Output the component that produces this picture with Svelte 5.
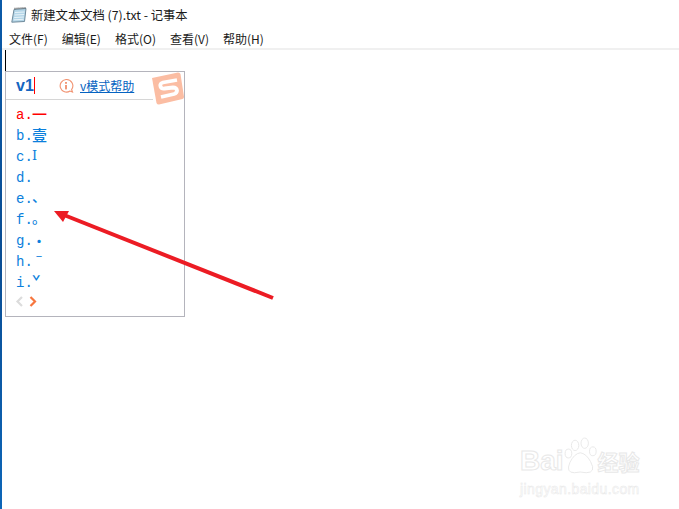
<script>
    const menus = ["文件(F)", "编辑(E)", "格式(O)", "查看(V)", "帮助(H)"];
    // up: how far the glyph sits above the row's middle
    const candidates = [
        { key: "a.", text: "一", active: true, up: 2 },
        { key: "b.", text: "壹", up: 2 },
        { key: "c.", text: "Ⅰ", roman: true, up: 2 },
        { key: "d.", text: "", up: 0 },
        { key: "e.", text: "、", small: true, up: 6 },
        { key: "f.", text: "。", small: true, up: 5 },
        { key: "g.", text: "·", small: true, up: 2 },
        { key: "h.", text: "ˉ", small: true, up: 3 },
        { key: "i.", text: "ˇ", small: true, up: 4 },
    ];
</script>

<div class="desktop">
    <div class="strip"></div>
    <div class="window">
        <div class="titlebar">
            <svg class="app-icon" width="16" height="16" viewBox="0 0 16 16">
                <path d="M3 2.5 L15 1.5 L13.5 14.5 L0.8 15.2 Z" fill="#b4d6e8" stroke="#6f8a9b" stroke-width="1" />
                <path d="M4 5.5 L13.5 5 M3.6 8 L13.2 7.5 M3.2 10.5 L12.9 10 M2.8 12.8 L12.6 12.3" stroke="#e8f3f9" stroke-width="1" />
                <path d="M3.5 1.5 L14.5 0.8" stroke="#555" stroke-width="1.4" stroke-dasharray="1 1" />
            </svg>
            <span>新建文本文档 (7).txt - 记事本</span>
        </div>
        <div class="menubar">
            {#each menus as m}
                <span>{m}</span>
            {/each}
        </div>
        <div class="editor">
            <div class="caret"></div>

            <div class="ime">
                <div class="ime-head">
                    <div class="comp"><b>v1</b><i class="ime-caret"></i></div>
                    <svg class="info" width="16" height="16" viewBox="0 0 16 16" fill="none">
                        <path d="M8 1.5 A6.3 6.3 0 1 0 12 13 L14.5 14 L13.6 11.5 A6.3 6.3 0 0 0 8 1.5 Z" stroke="#f19270" stroke-width="1.1" />
                        <rect x="7.2" y="4" width="1.6" height="1.8" fill="#ee7f58" />
                        <rect x="7.2" y="7" width="1.6" height="4.4" fill="#ee7f58" />
                    </svg>
                    <a class="help" href="#help">v模式帮助</a>
                </div>
                <svg class="sogou" width="34" height="33" viewBox="0 0 34 33">
                    <path d="M1 6 L27 0.5 Q29 0.5 29.5 2 L33 25 Q33 26.5 31.5 27 L8 32.5 Q6 32.5 5.5 31 Z" fill="#fbbda3" />
                    <path d="M26 8 L12 10.5 Q8.5 11.5 9.5 14.5 Q10.5 17 13.5 16.5 L22 15.5 Q25.5 15.5 26 18.5 Q26 21 23 22 L10 25" fill="none" stroke="#fff" stroke-width="3.8" />
                </svg>
                <ul class="list">
                    {#each candidates as c}
                        <li class:active={c.active}>
                            <span class="key">{c.key}</span><span class="word" class:roman={c.roman} class:small={c.small} style="margin-top: -{c.up}px">{c.text}</span>
                        </li>
                    {/each}
                </ul>
                <div class="pager">
                    <svg width="10" height="11" viewBox="0 0 10 11" fill="none"><path d="M7 1 L2.5 5.5 L7 10" stroke="#dcdcdc" stroke-width="2.2" /></svg>
                    <svg width="10" height="11" viewBox="0 0 10 11" fill="none"><path d="M2.5 1 L7 5.5 L2.5 10" stroke="#f7763e" stroke-width="2.2" /></svg>
                </div>
            </div>

            <svg class="arrow" width="240" height="110" viewBox="0 0 240 110">
                <path d="M219 87 L10 4" stroke="#ec1c24" stroke-width="4" />
                <path d="M0 0 L15 0 L9 11 Z" fill="#ec1c24" />
            </svg>
        </div>
    </div>

    <div class="watermark">
        <div class="brand">
            <span>Bai</span>
            <svg width="40" height="44" viewBox="0 0 46 56" fill="#fff" stroke="#e6e6e6" stroke-width="1.2">
                <ellipse cx="15" cy="15" rx="5" ry="7" />
                <ellipse cx="28" cy="12" rx="5" ry="7" />
                <ellipse cx="39" cy="23" rx="4.5" ry="6" />
                <ellipse cx="6" cy="26" rx="4.5" ry="6" />
                <path d="M22 25 Q30 26 36 37 Q44 52 30 52 Q22 50 14 52 Q2 52 8 38 Q14 26 22 25 Z" />
            </svg>
            <span class="cn">经验</span>
        </div>
        <div class="url">jingyan.baidu.com</div>
    </div>
</div>

<style>
    :global(body) {
        margin: 0;
        background: #fff;
    }
    .desktop {
        width: 679px;
        height: 509px;
        display: flex;
        position: relative;
        overflow: hidden;
        background: #fff;
        font-family: "Noto Sans CJK SC", "Liberation Sans", sans-serif;
    }
    .strip {
        width: 2px;
        background: linear-gradient(#0b5aa8, #0a4d94 50%, #0d66b8);
    }
    .window {
        flex: 1;
        display: flex;
        flex-direction: column;
        min-width: 0;
    }
    .titlebar {
        height: 29px;
        display: flex;
        align-items: center;
        gap: 4px;
        padding-left: 9px;
        font-size: 12.3px;
        color: #1a1a1a;
    }
    .menubar {
        height: 19px;
        display: flex;
        align-items: center;
        gap: 14px;
        padding-left: 7px;
        font-size: 12px;
        color: #1a1a1a;
        border-bottom: 2px solid #f0f0f0;
    }
    .editor {
        flex: 1;
        position: relative;
    }
    .caret {
        position: absolute;
        left: 3px;
        top: 0;
        width: 1px;
        height: 21px;
        background: #000;
    }
    .ime {
        position: absolute;
        left: 3px;
        top: 21px;
        width: 178px;
        height: 244px;
        border: 1px solid #b4b4bc;
        background: #fff;
        display: flex;
        flex-direction: column;
    }
    .ime-head {
        height: 27px;
        width: 147px;
        display: flex;
        align-items: center;
        border-bottom: 1px solid #d6d6d6;
        font-size: 12px;
    }
    .comp {
        width: 52px;
        padding-left: 10px;
        display: flex;
        align-items: center;
        box-sizing: border-box;
        color: #1565c0;
        font-family: "Liberation Sans", sans-serif;
        font-size: 16px;
    }
    .ime-caret {
        width: 1px;
        height: 17px;
        background: #f00;
    }
    .info {
        margin-right: 6px;
    }
    .help {
        color: #0563c1;
        text-decoration: underline;
        white-space: nowrap;
    }
    .sogou {
        position: absolute;
        right: -1px;
        top: 0;
    }
    .list {
        list-style: none;
        margin: 0;
        padding: 4px 0 0 10px;
        font-family: "Liberation Mono", monospace;
        font-size: 14px;
        color: #0b7fdc;
    }
    .list li {
        height: 21px;
        display: flex;
        align-items: center;
    }
    .list li.active {
        color: #f00;
    }
    .key {
        width: 16px;
    }
    .word {
        font-family: "Noto Sans CJK SC", sans-serif;
        font-size: 15px;
        font-weight: 500;
        line-height: 16px;
    }
    .word.small {
        font-size: 14px;
    }
    .word.roman {
        font-family: "DejaVu Serif", serif;
        font-size: 13px;
    }
    .pager {
        display: flex;
        gap: 3px;
        padding: 3px 0 0 9px;
    }
    .arrow {
        position: absolute;
        left: 52px;
        top: 161px;
    }
    .watermark {
        position: absolute;
        left: 520px;
        top: 434px;
        width: 130px;
        color: #fff;
        -webkit-text-stroke: 1px #e8e8e8;
        font-family: "Liberation Sans", sans-serif;
    }
    .brand {
        display: flex;
        align-items: flex-end;
        height: 42px;
        font-size: 28px;
        font-weight: 700;
        line-height: 30px;
    }
    .brand svg {
        width: 34px;
        height: 42px;
        flex: none;
    }
    .cn {
        font-family: "Noto Sans CJK SC", sans-serif;
        font-size: 21px;
    }
    .url {
        font-size: 14px;
        margin-top: 5px;
        -webkit-text-stroke: 0.5px #e8e8e8;
        letter-spacing: 0.4px;
        white-space: nowrap;
    }
</style>
